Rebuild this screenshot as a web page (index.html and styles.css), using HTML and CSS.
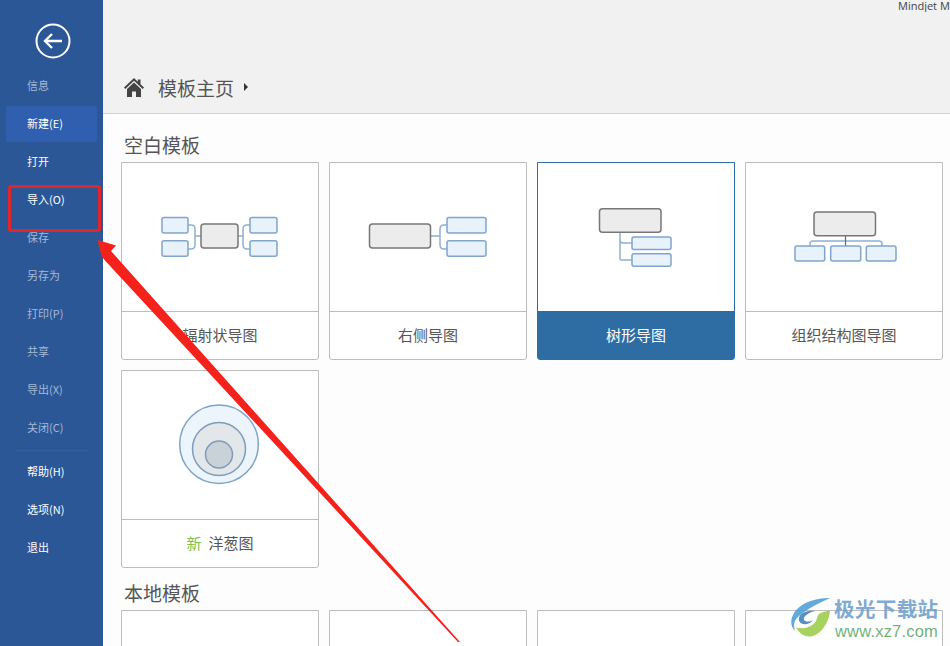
FILE: index.html
```html
<!DOCTYPE html>
<html lang="zh-CN">
<head>
    <meta charset="UTF-8">
    <title>模板主页</title>
    <link rel="stylesheet" href="styles.css">
</head>
<body>
    <div class="app">
        <nav class="sidebar">
            <div class="back-row">
                <svg class="back-icon" width="36" height="36" viewBox="0 0 36 36">
                    <circle cx="18" cy="18" r="16.5" fill="none" stroke="#fff" stroke-width="2"/>
                    <path d="M27 18H10M17 11l-7 7 7 7" fill="none" stroke="#fff" stroke-width="2.4"/>
                </svg>
            </div>
            <a class="nav-item dim">信息</a>
            <a class="nav-item active">新建(E)</a>
            <a class="nav-item">打开</a>
            <a class="nav-item">导入(O)</a>
            <a class="nav-item dim">保存</a>
            <a class="nav-item dim">另存为</a>
            <a class="nav-item dim">打印(P)</a>
            <a class="nav-item dim">共享</a>
            <a class="nav-item dim">导出(X)</a>
            <a class="nav-item dim">关闭(C)</a>
            <div class="nav-sep"></div>
            <a class="nav-item">帮助(H)</a>
            <a class="nav-item">选项(N)</a>
            <a class="nav-item">退出</a>
        </nav>

        <main class="main">
            <header class="topbar">
                <div class="app-name">Mindjet M</div>
                <div class="breadcrumb">
                    <svg class="home-icon" width="20" height="19" viewBox="0 0 20 19">
                        <path d="M10 0L0 9.5l1.3 1.4L10 2.8l8.7 8.1L20 9.5 16.5 6.2V1.5h-2.7v2.2z" fill="#444"/>
                        <path d="M10 4.6L3 11v8h5v-5.5h4V19h5v-8z" fill="#444"/>
                    </svg>
                    <span class="crumb-text">模板主页</span>
                    <span class="crumb-arrow"></span>
                </div>
            </header>

            <section class="content">
                <h2 class="group-title">空白模板</h2>
                <div class="card-grid">
                    <div class="card">
                        <div class="thumb">
                            <svg viewBox="0 0 196 148" width="196" height="148">
                                <path class="link" d="M66 62h3q4 0 4 4v16q0 4-4 4h-3M128 62h-3q-4 0-4 4v16q0 4 4 4h3"/>
                                <path class="link" d="M73 73h6M116 73h5"/>
                                <rect class="node" x="40" y="54.500" width="26" height="15.500" rx="2"/>
                                <rect class="node" x="40" y="77.700" width="26" height="15.500" rx="2"/>
                                <rect class="node" x="128" y="54.500" width="27" height="15.500" rx="2"/>
                                <rect class="node" x="128" y="77.700" width="27" height="15.500" rx="2"/>
                                <rect class="root" x="79" y="61" width="37" height="24" rx="3"/>
                            </svg>
                        </div>
                        <div class="card-label">辐射状导图</div>
                    </div>
                    <div class="card">
                        <div class="thumb">
                            <svg viewBox="0 0 196 148" width="196" height="148">
                                <path class="link" d="M117 62h-3q-4 0-4 4v16q0 4 4 4h3M100 73h10"/>
                                <rect class="node" x="117" y="54.500" width="39" height="15.500" rx="2"/>
                                <rect class="node" x="117" y="77.700" width="39" height="15.500" rx="2"/>
                                <rect class="root" x="39.500" y="61" width="61" height="24" rx="3"/>
                            </svg>
                        </div>
                        <div class="card-label">右侧导图</div>
                    </div>
                    <div class="card selected">
                        <div class="thumb">
                            <svg viewBox="0 0 196 148" width="196" height="148">
                                <path class="link" d="M82 69v27q0 1 1 1h11M82 77q0 3 3 3h9"/>
                                <rect class="node" x="94" y="74" width="39" height="12.500" rx="2"/>
                                <rect class="node" x="94" y="90.700" width="39" height="12.500" rx="2"/>
                                <rect class="root" x="61.500" y="45.700" width="61.500" height="23.500" rx="3"/>
                            </svg>
                        </div>
                        <div class="card-label">树形导图</div>
                    </div>
                    <div class="card">
                        <div class="thumb">
                            <svg viewBox="0 0 196 148" width="196" height="148">
                                <path class="link" d="M64 83v-2q0-3 3-3h66q3 0 3 3v2"/>
                                <path class="trunk" d="M99.500 72v11"/>
                                <rect class="node" x="49" y="83" width="29.700" height="15" rx="2"/>
                                <rect class="node" x="84.700" y="83" width="30" height="15" rx="2"/>
                                <rect class="node" x="120.300" y="83" width="29.700" height="15" rx="2"/>
                                <rect class="root" x="68" y="49" width="61.500" height="23.700" rx="3"/>
                            </svg>
                        </div>
                        <div class="card-label">组织结构图导图</div>
                    </div>
                    <div class="card">
                        <div class="thumb">
                            <svg viewBox="0 0 196 148" width="196" height="148">
                                <circle cx="97" cy="73.300" r="39.300" fill="#edf5fc" stroke="#7fa3c7" stroke-width="1.500"/>
                                <circle cx="97" cy="78" r="26.500" fill="#e4e7ea" stroke="#7c9bbd" stroke-width="1.500"/>
                                <circle cx="97" cy="83.500" r="13.500" fill="#c9d1d9" stroke="#7c9bbd" stroke-width="1.500"/>
                            </svg>
                        </div>
                        <div class="card-label"><span class="tag-new">新</span>洋葱图</div>
                    </div>
                </div>

                <h2 class="group-title second">本地模板</h2>
                <div class="card-grid">
                    <div class="card"></div>
                    <div class="card"></div>
                    <div class="card"></div>
                    <div class="card"></div>
                </div>
            </section>
        </main>
    </div>

    <!-- marca roja sobre la captura -->
    <div class="red-box"></div>
    <svg class="red-arrow" width="950" height="646" viewBox="0 0 950 646">
        <path d="M97.500 240L116 245.500 111 251 460 642 458 642 104.500 260 101.500 256z" fill="#f5211b"/>
    </svg>

    <div class="watermark">
        <svg class="wm-logo" width="44" height="44" viewBox="0 0 44 44">
            <path d="M41 1C26 1 10 6 4 18c-3 6-2 12 2 16-2-6-1-11 4-15C18 12 30 6 41 1z" fill="#4d9fd8"/>
            <path d="M26 14c-8-1-15 2-16 7-1 4 3 7 8 6 3-1 5-2 6-4-3 2-7 2-9 0-1-3 3-7 11-9z" fill="#3f7fb8"/>
            <path d="M41 14c-7 0-12 2-13 7-1 6-8 11-17 10-2 0-3 0-4-1 3 7 10 11 17 9 9-3 16-14 17-25z" fill="#9ccc4a"/>
        </svg>
        <div class="wm-text">
            <div class="wm-name">极光下载站</div>
            <div class="wm-url">www.xz7.com</div>
        </div>
    </div>
</body>
</html>
```

FILE: styles.css
```css
* {
    box-sizing: border-box;
}
html, body {
    height: 100%;
}
body {
    margin: 0;
    overflow: hidden;
    font-family: "Noto Sans CJK SC", "Open Sans", sans-serif;
    background-color: #fdfdfd;
}
.app {
    display: flex;
    height: 646px;
}
.sidebar {
    width: 103px;
    flex-shrink: 0;
    background-color: #2b5797;
    padding: 0 6px;
}
.back-row {
    height: 67px;
    padding-top: 23px;
    padding-left: 29px;
}
.back-icon {
    display: block;
}
.nav-item {
    display: flex;
    align-items: center;
    height: 38px;
    padding-left: 21px;
    padding-bottom: 2px;
    font-size: 11px;
    color: #fff;
}
.nav-item.dim {
    color: #a6b9d6;
}
.nav-item.active {
    background-color: #2f5fae;
    height: 36px;
    margin: 1px 0;
}
.nav-sep {
    height: 1px;
    margin: 3px 10px 2px 10px;
    background-color: #336099;
}
.main {
    flex: 1;
    min-width: 0;
    display: flex;
    flex-direction: column;
}
.topbar {
    height: 114px;
    flex-shrink: 0;
    background-color: #f1f1f1;
    border-bottom: 1px solid #d2d2d2;
    display: flex;
    flex-direction: column;
    justify-content: space-between;
}
.app-name {
    font-family: "Open Sans", sans-serif;
    font-size: 11px;
    line-height: 12px;
    color: #444;
    white-space: nowrap;
    overflow: hidden;
    padding-left: 795px;
}
.breadcrumb {
    display: flex;
    align-items: center;
    height: 28px;
    margin-bottom: 12px;
    padding-left: 21px;
}
.home-icon {
    margin-right: 14px;
}
.crumb-text {
    font-size: 19px;
    color: #555;
}
.crumb-arrow {
    margin-left: 10px;
    border-left: 4px solid #333;
    border-top: 4px solid transparent;
    border-bottom: 4px solid transparent;
}
.content {
    flex: 1;
    padding: 19px 0 0 18px;
    overflow: hidden;
}
.group-title {
    margin: 0 0 5px 3px;
    font-size: 19px;
    font-weight: normal;
    line-height: 24px;
    color: #555;
}
.group-title.second {
    margin-top: 13px;
}
.card-grid {
    display: grid;
    grid-template-columns: repeat(4, 198px);
    gap: 10px;
}
.card {
    height: 198px;
    background-color: #fff;
    border: 1px solid #bdbdbd;
    border-radius: 0 0 3px 3px;
    display: flex;
    flex-direction: column;
}
.thumb {
    height: 149px;
    border-bottom: 1px solid #bdbdbd;
}
.thumb svg {
    display: block;
}
.card-label {
    flex: 1;
    display: flex;
    align-items: center;
    justify-content: center;
    padding-bottom: 3px;
    font-size: 15px;
    color: #555;
}
.tag-new {
    color: #7fc24a;
    margin-right: 7px;
}
.card.selected {
    border-color: #2e6da4;
}
.card.selected .thumb {
    border-bottom-color: #2e6da4;
}
.card.selected .card-label {
    background-color: #2e6da4;
    color: #fff;
}
.link {
    fill: none;
    stroke: #8fb0d0;
    stroke-width: 1.500;
}
.trunk {
    fill: none;
    stroke: #3f6f9f;
    stroke-width: 1.200;
}
.node {
    fill: #e8f2fb;
    stroke: #7fa5cd;
    stroke-width: 1.500;
}
.root {
    fill: #ececec;
    stroke: #777;
    stroke-width: 1.500;
}
.red-box {
    position: absolute;
    left: 8px;
    top: 185px;
    width: 93px;
    height: 47px;
    border: 3px solid #e0252d;
    border-radius: 3px;
}
.red-arrow {
    position: absolute;
    left: 0;
    top: 0;
    pointer-events: none;
}
.watermark {
    position: absolute;
    left: 789px;
    top: 597px;
    display: flex;
    gap: 1px;
    opacity: 0.88;
}
.wm-logo {
    display: block;
}
.wm-name {
    font-size: 20.500px;
    font-weight: bold;
    line-height: 22px;
    letter-spacing: 0.400px;
    color: #6f9fcc;
    white-space: nowrap;
}
.wm-url {
    font-family: "Liberation Sans", sans-serif;
    font-size: 16.500px;
    line-height: 18px;
    letter-spacing: 0.200px;
    margin-top: 3px;
    margin-left: 1px;
    color: #5fa86a;
    white-space: nowrap;
}
```
